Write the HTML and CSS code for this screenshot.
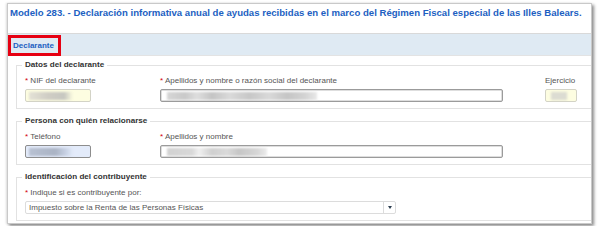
FILE: index.html
```html
<!DOCTYPE html>
<html lang="es">
<head>
<meta charset="utf-8">
<title>Modelo 283</title>
<link rel="stylesheet" href="styles.css">
</head>
<body>
<div class="panel">
  <div class="title">Modelo 283. - Declaración informativa anual de ayudas recibidas en el marco del Régimen Fiscal especial de las Illes Balears.</div>
  <div class="tabbar"><span class="tab">Declarante</span></div>
  <div class="content">
    <fieldset class="group">
      <legend>Datos del declarante</legend>
      <div class="row">
        <div class="field w-short">
          <label><span class="req">*</span> NIF del declarante</label>
          <div class="input short yellow"><span class="blur bl-nif"></span></div>
        </div>
        <div class="field w-long">
          <label><span class="req">*</span> Apellidos y nombre o razón social del declarante</label>
          <div class="input long"><span class="blur bl-name"></span></div>
        </div>
        <div class="field w-year">
          <label>Ejercicio</label>
          <div class="input year yellow"><span class="blur bl-year"></span></div>
        </div>
      </div>
    </fieldset>
    <fieldset class="group">
      <legend>Persona con quién relacionarse</legend>
      <div class="row">
        <div class="field w-short">
          <label><span class="req">*</span> Teléfono</label>
          <div class="input short blue"><span class="blur bl-tel"></span></div>
        </div>
        <div class="field w-long">
          <label><span class="req">*</span> Apellidos y nombre</label>
          <div class="input long"><span class="blur bl-contact"></span></div>
        </div>
      </div>
    </fieldset>
    <fieldset class="group">
      <legend>Identificación del contribuyente</legend>
      <div class="field">
        <label><span class="req">*</span> Indique si es contribuyente por:</label>
        <div class="select">
          <span class="select-text">Impuesto sobre la Renta de las Personas Físicas</span>
          <span class="select-btn"><span class="caret"></span></span>
        </div>
      </div>
    </fieldset>
  </div>
</div>
</body>
</html>
```

FILE: styles.css
```css
* { box-sizing: border-box; }

html, body {
  margin: 0;
  padding: 0;
  background: #ffffff;
}

body {
  font-family: "Liberation Sans", Arial, sans-serif;
  width: 598px;
  height: 226px;
  overflow: hidden;
}

.panel {
  margin: 3px 0 0 7px;
  width: 585px;
  border: 1px solid #c9c9c9;
  background: #fff;
  box-shadow: 2px 2px 3px rgba(0, 0, 0, 0.45), -1px 0 2px rgba(0, 0, 0, 0.12);
  overflow: hidden;
}

.title {
  height: 29px;
  padding: 3px 0 0 2px;
  font-size: 9.6px;
  line-height: 12px;
  font-weight: bold;
  color: #1d5fc2;
  white-space: nowrap;
}

.tabbar {
  display: flex;
  align-items: flex-start;
  height: 23px;
  background: #dfeaf3;
  border-top: 1px solid #d9d9d9;
  border-bottom: 1px solid #e3e3e3;
}

.tab {
  margin-top: 1px;
  width: 53px;
  height: 21px;
  border: 3px solid #e60012;
  padding-left: 2px;
  font-size: 8px;
  line-height: 15px;
  font-weight: bold;
  color: #1d5fc2;
}

.content {
  padding: 4px 0 2px 8px;
}

.group {
  margin: 0 0 7px 0;
  padding: 6px 0 6px 8px;
  border: 1px solid #e2e2e2;
  border-right: none;
  min-width: 0;
}

.group:last-child {
  margin-bottom: 0;
  padding-bottom: 6px;
}

.group legend {
  margin-left: -3px;
  padding: 0 3px;
  font-size: 8.1px;
  line-height: 10px;
  font-weight: bold;
  color: #333;
}

.row {
  display: flex;
}

.field label {
  display: block;
  font-size: 8px;
  line-height: 10px;
  color: #555;
  white-space: nowrap;
}

.req { color: #d2000e; }

.w-short { width: 135px; }
.w-long { width: 385px; }
.w-year { width: 32px; }

.input {
  margin-top: 3px;
  height: 13px;
  border: 1px solid #a3a3a3;
  border-radius: 2px;
  background: #fff;
  display: flex;
  align-items: center;
  padding-left: 3px;
  overflow: hidden;
}

.input.short { width: 66px; }
.input.long { width: 343px; border-color: #9b9b9b; box-shadow: inset 0 0 0 0.5px #bdbdbd; }
.input.year { width: 32px; }

.input.yellow {
  background: #fdfde1;
  border-color: #d3d3c6;
}

.input.blue {
  background: #e3ebfa;
  border-color: #8d8d8d;
}

.blur {
  display: block;
  height: 8px;
  background: #c8c8c8;
  filter: blur(1.2px);
}

.bl-nif { width: 44px; background: linear-gradient(90deg, #e4e2d6 0%, #cfcdc4 45%, #c7c7c0 80%, #fdfde1 100%); }
.bl-year { width: 16px; margin-left: 2px; background: #dcdcd2; }
.bl-tel { width: 44px; background: linear-gradient(90deg, #b8c1d2 0%, #aab3c4 60%, #c9d3e6 85%, #e3ebfa 100%); }
.bl-name {
  width: 150px;
  margin-left: 3px;
  background: linear-gradient(90deg, #d6d6d6 0%, #c9c9c9 12%, #dedede 20%, #c4c4c4 30%, #dadada 42%, #c7c7c7 55%, #d9d9d9 68%, #c5c5c5 80%, #d3d3d3 92%, #e8e8e8 100%);
}
.bl-contact {
  width: 100px;
  margin-left: 3px;
  background: linear-gradient(90deg, #d2d2d2 0%, #d8d8d8 25%, #f0f0f0 32%, #cfcfcf 45%, #dadada 60%, #c6c6c6 72%, #d6d6d6 90%, #ececec 100%);
}

.select {
  margin-top: 3px;
  width: 371px;
  height: 13px;
  display: flex;
  border: 1px solid #dcdcdc;
  border-radius: 2px;
  background: #fff;
}

.select-text {
  flex: 1;
  padding-left: 3px;
  font-size: 8px;
  line-height: 11px;
  color: #555;
  white-space: nowrap;
}

.select-btn {
  width: 12px;
  border-left: 1px solid #dcdcdc;
  display: flex;
  align-items: center;
  justify-content: center;
}

.caret {
  width: 0;
  height: 0;
  border-left: 2.5px solid transparent;
  border-right: 2.5px solid transparent;
  border-top: 3px solid #2c3e50;
}
```
